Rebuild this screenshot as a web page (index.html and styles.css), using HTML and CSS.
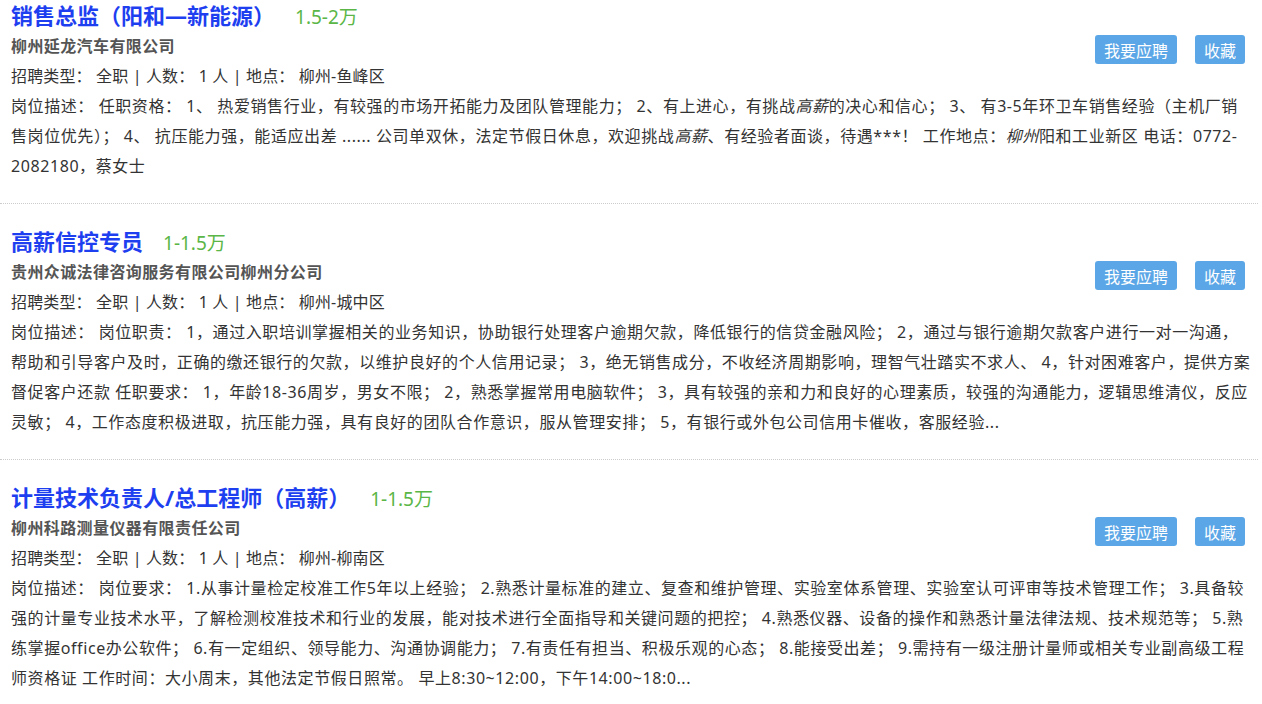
FILE: index.html
```html
<!DOCTYPE html>
<html lang="zh-CN">
<head>
    <meta charset="UTF-8">
    <meta name="viewport" content="width=device-width, initial-scale=1.0">
    <title>职位列表</title>
    <link rel="stylesheet" href="styles.css">
</head>
<body>
    <ul class="job-list">
        <li class="job">
            <div class="job-head">
                <div class="job-main">
                    <h3 class="job-title"><a href="#">销售总监（阳和—新能源）</a><span class="salary">1.5-2万</span></h3>
                    <p class="company">柳州延龙汽车有限公司</p>
                    <p class="info">招聘类型： 全职 | 人数： 1 人 | 地点： 柳州-鱼峰区</p>
                </div>
                <div class="job-actions">
                    <button class="btn">我要应聘</button>
                    <button class="btn">收藏</button>
                </div>
            </div>
            <p class="desc">岗位描述： 任职资格： 1、 热爱销售行业，有较强的市场开拓能力及团队管理能力； 2、有上进心，有挑战<em>高薪</em>的决心和信心； 3、 有3-5年环卫车销售经验（主机厂销售岗位优先）； 4、 抗压能力强，能适应出差 ...... 公司单双休，法定节假日休息，欢迎挑战<em>高薪</em>、有经验者面谈，待遇***！ 工作地点：<em>柳州</em>阳和工业新区 电话：0772-2082180，蔡女士</p>
        </li>
        <li class="job">
            <div class="job-head">
                <div class="job-main">
                    <h3 class="job-title"><a href="#">高薪信控专员</a><span class="salary">1-1.5万</span></h3>
                    <p class="company">贵州众诚法律咨询服务有限公司柳州分公司</p>
                    <p class="info">招聘类型： 全职 | 人数： 1 人 | 地点： 柳州-城中区</p>
                </div>
                <div class="job-actions">
                    <button class="btn">我要应聘</button>
                    <button class="btn">收藏</button>
                </div>
            </div>
            <p class="desc">岗位描述： 岗位职责： 1，通过入职培训掌握相关的业务知识，协助银行处理客户逾期欠款，降低银行的信贷金融风险； 2，通过与银行逾期欠款客户进行一对一沟通，帮助和引导客户及时，正确的缴还银行的欠款，以维护良好的个人信用记录； 3，绝无销售成分，不收经济周期影响，理智气壮踏实不求人、 4，针对困难客户，提供方案督促客户还款 任职要求： 1，年龄18-36周岁，男女不限； 2，熟悉掌握常用电脑软件； 3，具有较强的亲和力和良好的心理素质，较强的沟通能力，逻辑思维清仪，反应灵敏； 4，工作态度积极进取，抗压能力强，具有良好的团队合作意识，服从管理安排； 5，有银行或外包公司信用卡催收，客服经验...</p>
        </li>
        <li class="job">
            <div class="job-head">
                <div class="job-main">
                    <h3 class="job-title"><a href="#">计量技术负责人/总工程师（高薪）</a><span class="salary">1-1.5万</span></h3>
                    <p class="company">柳州科路测量仪器有限责任公司</p>
                    <p class="info">招聘类型： 全职 | 人数： 1 人 | 地点： 柳州-柳南区</p>
                </div>
                <div class="job-actions">
                    <button class="btn">我要应聘</button>
                    <button class="btn">收藏</button>
                </div>
            </div>
            <p class="desc">岗位描述： 岗位要求： 1.从事计量检定校准工作5年以上经验； 2.熟悉计量标准的建立、复查和维护管理、实验室体系管理、实验室认可评审等技术管理工作； 3.具备较强的计量专业技术水平，了解检测校准技术和行业的发展，能对技术进行全面指导和关键问题的把控； 4.熟悉仪器、设备的操作和熟悉计量法律法规、技术规范等； 5.熟练掌握office办公软件； 6.有一定组织、领导能力、沟通协调能力； 7.有责任有担当、积极乐观的心态； 8.能接受出差； 9.需持有一级注册计量师或相关专业副高级工程师资格证 工作时间：大小周末，其他法定节假日照常。 早上8:30~12:00，下午14:00~18:0...</p>
        </li>
    </ul>
</body>
</html>
```

FILE: styles.css
```css
body {
    margin: 0;
    background-color: #fff;
    font-family: "Noto Sans", "Noto Sans CJK SC", sans-serif;
    color: #333;
}
.job-list {
    list-style: none;
    margin: 0;
    padding: 0;
    width: 1258px;
}
.job {
    padding: 21px 5px 22px 11px;
    border-bottom: 1px dotted #ccc;
}
.job:first-child {
    padding-top: 0;
    margin-top: -1px;
}
.job-head {
    display: flex;
    justify-content: space-between;
    align-items: flex-start;
}
.job-title {
    margin: 0;
    font-size: 22px;
    line-height: 32px;
    font-weight: bold;
}
.job-title a {
    color: #1e3ff0;
    text-decoration: none;
}
.salary {
    margin-left: 20px;
    font-size: 19px;
    line-height: 1;
    font-weight: normal;
    color: #5ab646;
}
.company {
    margin: 0;
    font-size: 16px;
    line-height: 30px;
    font-weight: bold;
    letter-spacing: 0.4px;
    color: #555;
}
.info {
    margin: 0;
    font-size: 16px;
    line-height: 30px;
    letter-spacing: 0.15px;
    color: #333;
}
.job-actions {
    display: flex;
    gap: 18px;
    margin-top: 36px;
    margin-right: 8px;
}
.btn {
    height: 29px;
    padding: 0 9px;
    font-family: inherit;
    font-size: 16px;
    color: #fff;
    background-color: #5ba6e6;
    border: none;
    border-radius: 3px;
    cursor: pointer;
}
.desc {
    margin: 0;
    font-size: 16px;
    line-height: 30px;
    letter-spacing: 0.58px;
    color: #333;
}
.desc em {
    font-style: italic;
}
```
